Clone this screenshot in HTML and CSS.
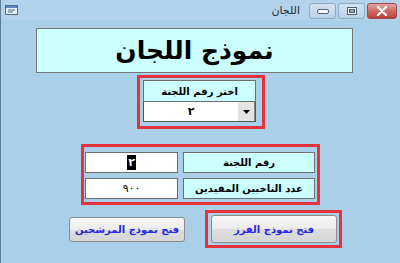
FILE: index.html
```html
<!DOCTYPE html>
<html lang="ar" dir="rtl">
<head>
  <meta charset="UTF-8">
  <title>اللجان</title>
  <link rel="stylesheet" href="styles.css">
</head>
<body>
  <div class="window">
    <div class="titlebar">
      <div class="win-buttons">
        <span class="wbtn close">
          <svg width="12" height="10" viewBox="0 0 12 10"><path d="M2 1 L10 9 M10 1 L2 9" stroke="#fff" stroke-width="2.4" stroke-linecap="round"/></svg>
        </span>
        <span class="wbtn">
          <svg width="10" height="8" viewBox="0 0 10 8"><rect x="0.5" y="0.5" width="9" height="7" fill="#fff" stroke="#4c5f73"/><rect x="2.5" y="2.5" width="5" height="3" fill="#8ab" stroke="#4c5f73"/></svg>
        </span>
        <span class="wbtn">
          <svg width="12" height="6" viewBox="0 0 12 6"><rect x="0.5" y="1.5" width="11" height="4" rx="1.5" fill="#fff" stroke="#4c5f73"/></svg>
        </span>
      </div>
      <span class="win-title">اللجان</span>
      <span class="win-icon">
        <svg width="13" height="10" viewBox="0 0 13 10">
          <rect x="0.5" y="0.5" width="12" height="9" fill="#e8f0f8" stroke="#4f6f96"/>
          <rect x="1" y="1" width="11" height="2" fill="#5b86c0"/>
          <path d="M3 5 H10 M3 7 H8" stroke="#4f6f96"/>
        </svg>
      </span>
    </div>

    <div class="client">
      <div class="form-title">نموذج اللجان</div>

      <div class="frame pick">
        <div class="cell label">اختر رقم اللجنة</div>
        <div class="combo">
          <span class="combo-btn">
            <svg width="7" height="4" viewBox="0 0 7 4"><path d="M0 0 H7 L3.5 4 Z" fill="#000"/></svg>
          </span>
          <span class="combo-val">٢</span>
        </div>
      </div>

      <div class="frame info">
        <div class="row">
          <div class="cell label wide">رقم اللجنة</div>
          <div class="cell value"><span class="sel">٢</span></div>
        </div>
        <div class="row">
          <div class="cell label wide">عدد الناخبين المقيدين</div>
          <div class="cell value">٩٠٠</div>
        </div>
      </div>

      <div class="actions">
        <div class="frame btn-frame">
          <button class="btn big">فتح نموذج الفرز</button>
        </div>
        <button class="btn">فتح نموذج المرشحين</button>
      </div>
    </div>
  </div>
</body>
</html>
```

FILE: styles.css
```css
body {
  margin: 0;
  font-family: "DejaVu Sans", sans-serif;
  background-color: #a9cfe9;
}
.window {
  width: 400px;
  height: 263px;
  box-sizing: border-box;
  border-left: 1px solid #5f7f99;
  background-color: #a9cfe9;
  overflow: hidden;
}
.titlebar {
  height: 20px;
  display: flex;
  align-items: center;
  background-color: #b3d3ec;
  padding-right: 3px;
}
.win-buttons {
  display: flex;
  gap: 2px;
  margin-top: 2px;
}
.wbtn {
  width: 25px;
  height: 14px;
  display: flex;
  align-items: center;
  justify-content: center;
  border: 1px solid #8fa9c0;
  border-radius: 3px;
  background: linear-gradient(#d2e3f1, #b9d2e8);
}
.wbtn.close {
  width: 28px;
  border-color: #9a4a48;
  background: linear-gradient(#e3a59c, #cf6a62 50%, #bd3f3b);
}
.win-title {
  margin-right: 9px;
  font-size: 11px;
  color: #1e2a36;
}
.win-icon {
  margin-right: auto;
  margin-left: 4px;
  display: flex;
}
.client {
  display: flex;
  flex-direction: column;
  align-items: flex-start;
}
.form-title {
  margin: 8px 47px 0 0;
  width: 317px;
  height: 45px;
  box-sizing: border-box;
  border: 1px solid #767676;
  background-color: #ccffff;
  display: flex;
  align-items: center;
  justify-content: center;
  font-size: 25px;
  font-weight: bold;
  color: #000;
}
.frame {
  box-sizing: border-box;
  border: 3px solid #e6323c;
}
.pick {
  margin: 2px 135px 0 0;
  width: 128px;
  height: 54px;
  padding: 2px 6px 4px 3px;
  display: flex;
  flex-direction: column;
}
.cell {
  box-sizing: border-box;
  border: 1px solid #6f6f6f;
  display: flex;
  align-items: center;
  justify-content: center;
  font-size: 10px;
  font-weight: bold;
  color: #000;
}
.label {
  background-color: #ccffff;
}
.pick .label {
  height: 22px;
}
.combo {
  height: 20px;
  display: flex;
  box-sizing: border-box;
  border: 1px solid #555;
  border-top: none;
  background-color: #fff;
}
.combo-btn {
  width: 16px;
  display: flex;
  align-items: center;
  justify-content: center;
  border-right: 1px solid #888;
  background-color: #e4e4e4;
}
.combo-val {
  flex: 1;
  display: flex;
  align-items: center;
  justify-content: center;
  font-size: 11px;
  font-weight: bold;
}
.info {
  margin: 15px 80px 0 0;
  width: 239px;
  height: 61px;
  padding: 5px 2px 3px 1px;
  display: flex;
  flex-direction: column;
  gap: 5px;
}
.row {
  display: flex;
  gap: 5px;
  height: 21px;
}
.wide {
  width: 132px;
}
.value {
  width: 93px;
  background-color: #fff;
  font-weight: normal;
  font-size: 11px;
}
.sel {
  background-color: #000;
  color: #fff;
  padding: 1px 1px;
  font-weight: bold;
}
.actions {
  margin: 5px 58px 0 0;
  display: flex;
  align-items: center;
  gap: 20px;
}
.btn-frame {
  width: 137px;
  height: 38px;
  padding: 2px 2px 2px 3px;
}
.btn {
  width: 116px;
  height: 25px;
  margin: 0;
  padding: 0;
  border: 1px solid #8c8c8c;
  border-radius: 3px;
  background: linear-gradient(#f7f7f7, #ececec 50%, #dddddd 51%, #d6d6d6);
  color: #2828dc;
  font-family: "DejaVu Sans", sans-serif;
  font-size: 10px;
  font-weight: bold;
}
.btn.big {
  width: 126px;
  height: 28px;
}
```
